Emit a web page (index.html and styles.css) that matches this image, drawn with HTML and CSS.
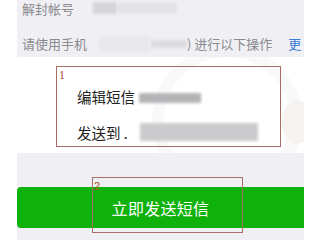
FILE: index.html
```
<!DOCTYPE html>
<html>
<head>
<meta charset="utf-8">
<link rel="stylesheet" href="styles.css">
</head>
<body>
<div class="page">
  <div class="row row1">
    <span class="label">解封帐号</span>
    <span class="blur b1"></span>
    <span class="blur b2"></span>
  </div>
  <div class="row row2">
    <span class="label">请使用手机</span>
    <span class="blur b3"></span>
    <span class="blur b4"></span>
    <span class="label tail">) 进行以下操作</span>
    <span class="link">更</span>
  </div>
  <div class="card">
    <div class="ghost"></div>
    <div class="half"></div>
    <div class="mark mark1">
      <span class="num">1</span>
      <div class="line"><span class="txt">编辑短信</span><span class="blur b5"></span></div>
      <div class="line"><span class="txt">发送到 .</span><span class="blur b6"></span></div>
    </div>
  </div>
  <div class="gap"></div>
  <div class="btn">
    <span class="btntext">立即发送短信</span>
    <div class="mark mark2"><span class="num">2</span></div>
  </div>
</div>
</body>
</html>
```
FILE: styles.css
```
html, body { margin: 0; padding: 0; background: #fff; }
body { font-family: "Noto Sans CJK SC", "Noto Sans", sans-serif; width: 320px; height: 240px; overflow: hidden; }
.page { margin-left: 17px; width: 287px; height: 240px; background: #efeff4; display: flex; flex-direction: column; }
.row { display: flex; align-items: center; padding-left: 5px; color: #8a8a8f; font-size: 13px; }
.row1 { height: 16px; padding-bottom: 14px; }
.row2 { height: 27px; }
.label { white-space: nowrap; }
.blur { display: inline-block; filter: blur(1.5px); }
.b1 { width: 24px; height: 12px; background: #d4d4da; margin-left: 19px; }
.b2 { width: 60px; height: 10px; background: #e2e2e7; }
.b3 { width: 50px; height: 16px; background: #e8e8ec; margin-left: 12px; }
.b4 { width: 36px; height: 8px; background: #dcdce0; margin-left: 2px; }
.link { color: #3b7dd8; margin-left: 16px; }
.card { position: relative; background: #fff; height: 96px; padding-top: 9px; box-sizing: border-box; overflow: hidden; }
.ghost { position: absolute; left: 135px; top: -12px; width: 150px; height: 150px; border-radius: 50%; border: 12px solid #faf9fa; box-sizing: border-box; }
.half { position: absolute; left: 265px; top: 43px; width: 30px; height: 44px; border-radius: 50%; background: #f6f2f0; }
.mark { position: relative; border: 1px solid #a86e66; box-sizing: border-box; }
.mark1 { margin-left: 39px; width: 225px; height: 81px; padding: 11px 0 0 20px; }
.num { position: absolute; left: 2px; top: 2px; font-family: "Liberation Serif", serif; font-size: 12px; color: #b0433a; line-height: 12px; }
.line { display: flex; align-items: center; height: 36px; font-size: 14.5px; color: #222; }
.txt { white-space: nowrap; }
.b5 { width: 62px; height: 10px; background: #b4b4b7; margin-left: 4px; margin-top: 4px; }
.b6 { width: 118px; height: 18px; background: #cbcbce; margin-left: 12px; }
.gap { height: 34px; }
.btn { position: relative; height: 41px; background: #0fb20b; border-radius: 4px 0 0 4px; display: flex; align-items: center; justify-content: center; }
.btntext { color: #fff; font-size: 16px; letter-spacing: 0.3px; }
.mark2 { position: absolute; left: 75px; top: -10px; width: 151px; height: 56px; }
.mark2 .num { color: #b05020; font-family: "Liberation Sans", sans-serif; font-size: 11px; left: 1px; top: 2px; }
```
